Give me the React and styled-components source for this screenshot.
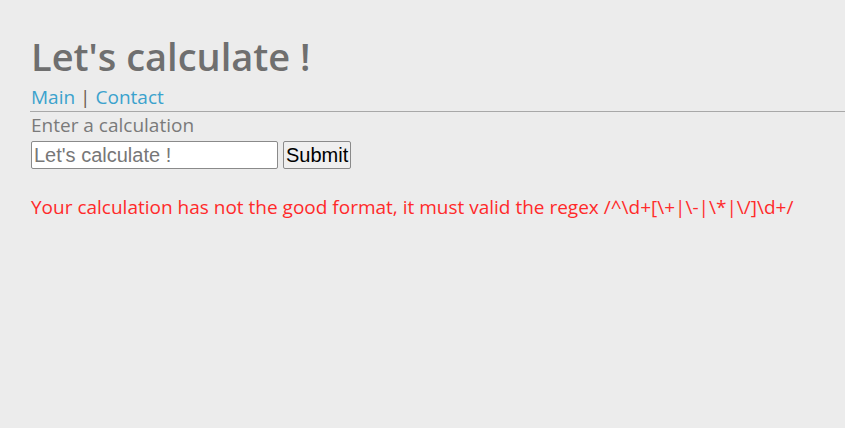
import styled, { createGlobalStyle } from 'styled-components';

const GlobalStyle = createGlobalStyle`
  html, body {
    margin: 0;
    padding: 0;
    background: #ececec;
  }
  body {
    font-family: 'Open Sans', sans-serif;
  }
`;

const Page = styled.div`
  padding: 30px 0 0 30px;
  min-height: 428px;
  box-sizing: border-box;
`;

const Title = styled.h1`
  margin: 0 0 4px 1px;
  font-size: 38px;
  line-height: 52px;
  font-weight: 600;
  color: #6f6f6f;
`;

const Nav = styled.nav`
  display: flex;
  align-items: center;
  gap: 5px;
  padding: 0 0 3px 1px;
  font-size: 19px;
  line-height: 22px;
  border-bottom: 1.5px solid #a8a8a8;
`;

const NavLink = styled.a`
  color: #3ba2cd;
  text-decoration: none;
`;

const Sep = styled.span`
  color: #6b5a4e;
`;

const Form = styled.form`
  display: flex;
  flex-direction: column;
  padding-top: 2px;
`;

const Label = styled.label`
  font-size: 19px;
  line-height: 22px;
  color: #7a7a7a;
  padding-left: 1px;
`;

const Row = styled.div`
  display: flex;
  gap: 5px;
  margin: 5px 0 0 1px;
`;

const Input = styled.input`
  width: 247px;
  height: 28px;
  box-sizing: border-box;
  border: 1px solid #8a8a8a;
  border-radius: 2px;
  background: #fff;
  font-family: 'Liberation Sans', Arial, sans-serif;
  font-size: 20px;
  color: #777;
  padding: 0 2px;
`;

const Button = styled.button`
  height: 28px;
  box-sizing: border-box;
  border: 1px solid #8a8a8a;
  border-radius: 2px;
  background: #efefef;
  font-family: 'Liberation Sans', Arial, sans-serif;
  font-size: 20px;
  color: #000;
  padding: 0 2px;
`;

const Error = styled.p`
  margin: 26px 0 0 1px;
  font-size: 19px;
  line-height: 24px;
  color: #ff2a2a;
`;

export default function App() {
  return (
    <>
      <GlobalStyle />
      <Page>
        <Title>Let's calculate !</Title>
        <Nav>
          <NavLink href="#">Main</NavLink>
          <Sep>|</Sep>
          <NavLink href="#">Contact</NavLink>
        </Nav>
        <Form onSubmit={(e) => e.preventDefault()}>
          <Label htmlFor="calc">Enter a calculation</Label>
          <Row>
            <Input id="calc" type="text" defaultValue="Let's calculate !" />
            <Button type="submit">Submit</Button>
          </Row>
        </Form>
        <Error>
          Your calculation has not the good format, it must valid the regex /^\d+[\+|\-|\*|\/]\d+/
        </Error>
      </Page>
    </>
  );
}
